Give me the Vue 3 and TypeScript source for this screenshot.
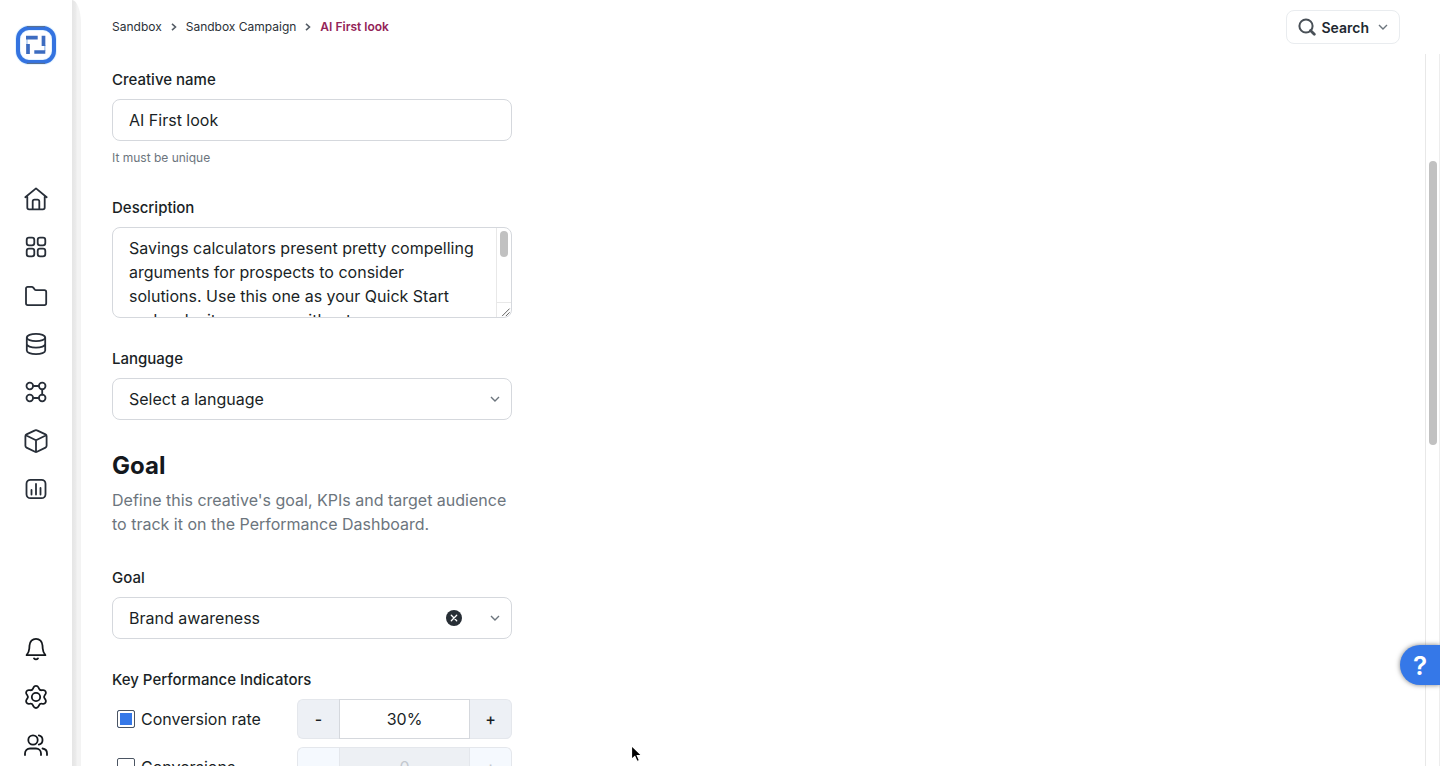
<script setup lang="ts">
import { ref } from 'vue'

interface Kpi {
  id: string
  label: string
  enabled: boolean
  value: string
}

const creativeName = ref('AI First look')
const description = ref(
  'Savings calculators present pretty compelling arguments for prospects to consider solutions. Use this one as your Quick Start and make it your own without any resources.',
)
const language = ref('')
const goal = ref('Brand awareness')
const kpis = ref<Kpi[]>([
  { id: 'rate', label: 'Conversion rate', enabled: true, value: '30%' },
  { id: 'conversions', label: 'Conversions', enabled: false, value: '0' },
])

function step(kpi: Kpi, delta: number) {
  const suffix = kpi.value.endsWith('%') ? '%' : ''
  kpi.value = `${Math.max(0, (parseInt(kpi.value, 10) || 0) + delta)}${suffix}`
}
</script>

<template>
  <div class="app">
    <aside class="sidebar">
      <a class="logo" href="#" aria-label="Start page">
        <svg width="42" height="42" viewBox="0 0 42 42" fill="none">
          <rect x="3" y="4" width="36" height="34" rx="11" stroke="#e3f4ff" stroke-width="6" />
          <rect x="3" y="4" width="36" height="34" rx="11" stroke="#3473e0" stroke-width="4" />
          <path d="M12 2.600h18M12 39.400h18" stroke="#5f7089" stroke-width="1" />
          <path d="M12 15v6M29.800 21v6" stroke="#a9c8f0" stroke-width="1.400" />
          <path d="M11 13.700h11.700M28.500 11.700V22M13 20v10M19.300 28h11" stroke="#3c6cc0" stroke-width="3.700" />
        </svg>
      </a>
      <nav class="nav nav-main" aria-label="Main">
        <a href="#" aria-label="Home">
          <svg viewBox="0 0 24 24"><path d="M1.300 10.200 12 1.400l10.700 8.800M3.300 8.800v11.700a1.800 1.800 0 0 0 1.800 1.800h13.800a1.800 1.800 0 0 0 1.800-1.800V8.800M8.700 22v-7.500a1.800 1.800 0 0 1 1.800-1.800h3a1.800 1.800 0 0 1 1.800 1.800V22" /></svg>
        </a>
        <a href="#" aria-label="Apps">
          <svg viewBox="0 0 24 24"><rect x="2.700" y="2.700" width="7.600" height="7.600" rx="2.300" /><rect x="13.700" y="2.700" width="7.600" height="7.600" rx="2.300" /><rect x="2.700" y="13.700" width="7.600" height="7.600" rx="2.300" /><rect x="13.700" y="13.700" width="7.600" height="7.600" rx="2.300" /></svg>
        </a>
        <a href="#" aria-label="Folders">
          <svg viewBox="0 0 24 24"><path d="M2 4.500c0-1 .7-1.700 1.700-1.700h4c.7 0 1.200.3 1.600.8l1.400 1.900c.3.500.8.700 1.400.7h8.300c1 0 1.800.8 1.800 1.800v11.300c0 1-.8 1.800-1.800 1.800H3.800c-1 0-1.800-.8-1.800-1.800z" /></svg>
        </a>
        <a href="#" aria-label="Data">
          <svg viewBox="0 0 24 24"><ellipse cx="12" cy="5.500" rx="9.200" ry="3.700" /><path d="M2.800 5.500v13c0 2 4.100 3.700 9.200 3.700s9.200-1.700 9.200-3.700v-13M2.800 12c0 2 4.100 3.600 9.200 3.600s9.200-1.600 9.200-3.600" /></svg>
        </a>
        <a href="#" aria-label="Workflows">
          <svg viewBox="0 0 24 24"><circle cx="5.800" cy="6" r="3.300" /><circle cx="18.200" cy="6" r="3.300" /><circle cx="5.800" cy="18" r="3.300" /><circle cx="18.200" cy="18" r="3.300" /><path d="M9.100 6h5.800M18.200 9.300v5.400M9.100 18h5.800" /></svg>
        </a>
        <a href="#" aria-label="Packages">
          <svg viewBox="0 0 24 24"><path d="M11 1.400a2 2 0 0 1 2 0l8.500 4a2 2 0 0 1 1.100 1.800v9.600a2 2 0 0 1-1.100 1.800L13 22.700a2 2 0 0 1-2 0l-8.500-4.100a2 2 0 0 1-1.100-1.800V7.200a2 2 0 0 1 1.100-1.800zM1.800 6.200 12 11.300l10.200-5.100M12 11.300v11.500" /></svg>
        </a>
        <a href="#" aria-label="Reports">
          <svg viewBox="0 0 24 24"><rect x="2.500" y="2.800" width="19" height="18.400" rx="4" /><path d="M7.500 13v4.500M12 7v10.500M16.500 11v6.500" /></svg>
        </a>
      </nav>
      <nav class="nav nav-bottom" aria-label="Account">
        <a href="#" aria-label="Notifications">
          <svg viewBox="0 0 24 24"><path d="M2.600 18.200c1.700-2 2.500-3.700 2.700-6.700l.2-3c.2-3.800 2.900-6.700 6.500-6.700s6.300 2.900 6.500 6.700l.2 3c.2 3 1 4.700 2.700 6.700zM10 21.400c.6.700 1.300 1 2 1s1.400-.3 2-1" /></svg>
        </a>
        <a href="#" aria-label="Settings">
          <svg viewBox="0 0 24 24"><circle cx="12" cy="12" r="4.200" /><path d="m9.500 2.500-.5 1.100a2.700 2.700 0 0 1-2.900 1.600L5 5.100C2.700 4.900 1.300 7.400 2.600 9.300l.7.900a2.700 2.700 0 0 1 0 3.400l-.7 1c-1.300 1.900.1 4.400 2.400 4.200l1.200-.1A2.700 2.700 0 0 1 9 20.300l.5 1.100c1 2.100 4 2.100 5 0l.5-1.100a2.700 2.700 0 0 1 2.800-1.600l1.200.1c2.300.2 3.700-2.300 2.400-4.200l-.7-1a2.700 2.700 0 0 1 0-3.400l.7-.9C22.700 7.400 21.300 4.900 19 5.100l-1.200.1A2.700 2.700 0 0 1 15 3.600l-.5-1.100c-1-2.100-4-2.100-5 0z" /></svg>
        </a>
        <a href="#" aria-label="Users">
          <svg viewBox="0 0 24 24"><circle cx="9" cy="7" r="4.700" /><path d="M14.800 2.400a4.700 4.700 0 0 1 0 9.200M1 22v-1.500a5 5 0 0 1 5-5h6a5 5 0 0 1 5 5V22M18.500 15.500c2.700.4 4.500 2.400 4.500 5V22" /></svg>
        </a>
      </nav>
    </aside>

    <div class="edge"></div>

    <div class="page">
      <header class="topbar">
        <nav class="crumbs" aria-label="Breadcrumb">
          <a href="#">Sandbox</a>
          <svg width="6" height="8" viewBox="0 0 6 8"><path d="M1 .8 4.500 4 1 7.200" /></svg>
          <a href="#">Sandbox Campaign</a>
          <svg width="6" height="8" viewBox="0 0 6 8"><path d="M1 .8 4.500 4 1 7.200" /></svg>
          <a class="current" href="#" aria-current="page">AI First look</a>
        </nav>
        <button class="search" type="button">
          <svg width="18" height="18" viewBox="0 0 18 18"><circle cx="8" cy="8" r="6.600" fill="none" stroke="#495057" stroke-width="2" /><path d="m12.500 12.500 3.800 3.800" stroke="#495057" stroke-width="2.800" stroke-linecap="round" /></svg>
          <span>Search</span>
          <svg class="chevron" width="10" height="6" viewBox="0 0 10 6"><path d="m1 1 4 4 4-4" /></svg>
        </button>
      </header>

      <div class="body">
        <main class="content">
          <form class="form" @submit.prevent>
            <div class="field">
              <label for="name">Creative name</label>
              <input id="name" v-model="creativeName" class="control" type="text" aria-describedby="name-hint" />
              <p id="name-hint" class="hint">It must be unique</p>
            </div>

            <div class="field">
              <label for="description">Description</label>
              <div class="area">
                <textarea id="description" v-model="description"></textarea>
                <div class="area-rail">
                  <div class="area-thumb"></div>
                  <svg class="grip" width="14" height="15" viewBox="0 0 14 15"><path d="m5 14 8-8M9 14l4-4" fill="none" stroke="#555" /></svg>
                </div>
              </div>
            </div>

            <div class="field">
              <label for="language">Language</label>
              <div class="picker">
                <select id="language" v-model="language" class="control">
                  <option value="">Select a language</option>
                  <option value="en">English</option>
                </select>
                <svg class="chevron" width="10" height="6" viewBox="0 0 10 6"><path d="m1 1 4 4 4-4" /></svg>
              </div>
            </div>

            <section class="intro">
              <h2>Goal</h2>
              <p>Define this creative's goal, KPIs and target audience to track it on the Performance Dashboard.</p>
            </section>

            <div class="field">
              <label for="goal">Goal</label>
              <div class="picker">
                <select id="goal" v-model="goal" class="control">
                  <option value=""></option>
                  <option>Brand awareness</option>
                </select>
                <button class="clear" type="button" aria-label="Clear goal" @click="goal = ''">
                  <svg width="16" height="16" viewBox="0 0 16 16"><circle cx="8" cy="8" r="8" fill="#272e35" /><path d="m5.300 5.300 5.400 5.400m0-5.400-5.400 5.400" stroke="#fff" stroke-width="1.300" stroke-linecap="round" /></svg>
                </button>
                <svg class="chevron" width="10" height="6" viewBox="0 0 10 6"><path d="m1 1 4 4 4-4" /></svg>
              </div>
            </div>

            <fieldset class="kpis">
              <legend>Key Performance Indicators</legend>
              <div v-for="kpi in kpis" :key="kpi.id" class="kpi">
                <label class="check">
                  <input v-model="kpi.enabled" type="checkbox" />
                  <span>{{ kpi.label }}</span>
                </label>
                <div class="stepper" :class="{ off: !kpi.enabled }">
                  <button type="button" :disabled="!kpi.enabled" :aria-label="`Decrease ${kpi.label}`" @click="step(kpi, -1)">-</button>
                  <input v-model="kpi.value" type="text" :disabled="!kpi.enabled" :aria-label="kpi.label" />
                  <button type="button" :disabled="!kpi.enabled" :aria-label="`Increase ${kpi.label}`" @click="step(kpi, 1)">+</button>
                </div>
              </div>
            </fieldset>
          </form>
        </main>
        <div class="rail"><div class="thumb"></div></div>
      </div>
    </div>

    <button class="help" type="button" aria-label="Help">?</button>

    <svg class="pointer" width="13" height="20" viewBox="0 0 13 20"><path d="M1.500 1.500v14l3.300-3.100 2.200 5.100 2.500-1-2.200-5h4.500z" fill="#000" stroke="#fff" stroke-width="1.200" /></svg>
  </div>
</template>

<style>
body {
  background: #fff;
}
</style>

<style scoped>
.app,
.app * {
  box-sizing: border-box;
}

.app {
  display: flex;
  height: 100vh;
  overflow: hidden;
  position: relative;
  background: #fff;
  color: #1a1f26;
  font-family: Inter, "Liberation Sans", sans-serif;
  font-size: 16px;
}

button,
input,
select,
textarea {
  font: inherit;
  color: inherit;
  margin: 0;
}

a {
  color: inherit;
  text-decoration: none;
}

/* Sidebar */
.sidebar {
  flex: none;
  width: 72px;
  display: flex;
  flex-direction: column;
  align-items: center;
  padding: 24px 0 9px;
}

.logo {
  height: 42px;
}

.nav {
  display: flex;
  flex-direction: column;
  gap: 24px;
  color: #272e38;
}

.nav-main {
  margin-top: 121px;
  min-height: 314px;
  justify-content: space-between;
}

.nav-bottom {
  margin-top: auto;
  color: #14181d;
}

.nav a,
.nav svg {
  display: block;
  width: 24px;
  height: 24px;
}

.nav svg {
  fill: none;
  stroke: currentColor;
  stroke-width: 1.8px;
  stroke-linecap: round;
  stroke-linejoin: round;
}

.edge {
  flex: none;
  width: 9px;
  background: linear-gradient(to right, #e6e6e6 0 1px, #ebebeb 4px, #f3f3f3 5px);
  border-top-right-radius: 9px 24px;
}

/* Top bar */
.page {
  flex: 1;
  min-width: 0;
  display: flex;
  flex-direction: column;
}

.topbar {
  flex: none;
  height: 54px;
  display: flex;
  align-items: center;
  justify-content: space-between;
  padding: 0 40px 0 31px;
}

.crumbs {
  display: flex;
  align-items: center;
  gap: 9px;
  font-size: 12px;
  line-height: 16px;
  color: #2b3138;
}

.crumbs svg {
  fill: none;
  stroke: #555d66;
  stroke-width: 1.6px;
}

.crumbs .current {
  color: #932358;
  font-weight: 600;
}

.search {
  display: flex;
  align-items: center;
  gap: 5px;
  height: 34px;
  padding: 0 11px;
  border: 1px solid #e9ecef;
  border-radius: 8px;
  background: #fff;
  font-size: 14px;
  font-weight: 600;
  color: #212830;
}

.search .chevron {
  margin-left: 4px;
}

.chevron {
  fill: none;
  stroke: #6c757d;
  stroke-width: 1.4px;
}

/* Scrolling area */
.body {
  flex: 1;
  min-height: 0;
  display: flex;
}

.content {
  flex: 1;
  min-width: 0;
  overflow: hidden;
  padding: 15px 31px 0;
}

.rail {
  flex: none;
  width: 15px;
  padding: 107px 3px 0;
  border-left: 1px solid #e8e8e8;
  border-right: 1px solid #ededed;
}

.thumb {
  width: 8px;
  height: 47%;
  border-radius: 4px;
  background: #c1c1c1;
}

/* Form */
.form {
  width: 400px;
  max-width: 100%;
  display: flex;
  flex-direction: column;
  gap: 30px;
}

.field {
  display: flex;
  flex-direction: column;
  gap: 8px;
}

.field > label,
legend {
  font-size: 15px;
  line-height: 22px;
  font-weight: 500;
}

.control {
  width: 100%;
  height: 42px;
  padding: 0 16px;
  border: 1px solid #d5d8dd;
  border-radius: 8px;
  background: #fff;
  appearance: none;
}

.hint {
  margin: 0;
  font-size: 12px;
  line-height: 18px;
  color: #6c757d;
}

.area {
  display: flex;
  height: 91px;
  overflow: hidden;
  border: 1px solid #d5d8dd;
  border-radius: 8px;
}

.area textarea {
  flex: 1;
  min-width: 0;
  padding: 8px 16px 0;
  border: 0;
  outline: 0;
  resize: none;
  overflow: hidden;
  background: transparent;
  line-height: 24px;
}

.area-rail {
  flex: none;
  width: 15px;
  display: flex;
  flex-direction: column;
  justify-content: space-between;
  padding-top: 3px;
  border-left: 1px solid #e8e8e8;
}

.area-thumb {
  width: 8px;
  height: 26px;
  margin-left: 3px;
  border-radius: 4px;
  background: #c1c1c1;
}

.grip {
  display: block;
  border-top: 1px solid #e8e8e8;
}

.picker {
  position: relative;
}

.picker .control {
  display: block;
}

.picker .chevron {
  position: absolute;
  top: 18px;
  right: 12px;
  pointer-events: none;
}

.clear {
  position: absolute;
  top: 13px;
  right: 50px;
  width: 16px;
  height: 16px;
  padding: 0;
  border: 0;
  background: none;
}

.clear svg {
  display: block;
}

.intro h2 {
  margin: 0 0 6px;
  font-size: 24px;
  line-height: 32px;
  font-weight: 700;
  color: #14181d;
}

.intro p {
  margin: 0;
  padding-bottom: 1px;
  line-height: 24px;
  color: #6c757d;
}

.kpis {
  min-width: 0;
  margin: 0;
  padding: 0;
  border: 0;
}

.kpis legend {
  padding: 0;
  margin-bottom: 8px;
}

.kpi {
  display: flex;
  align-items: center;
  justify-content: space-between;
  margin-bottom: 8px;
}

.check {
  display: flex;
  align-items: center;
  gap: 6px;
  padding-left: 5px;
}

.check input {
  appearance: none;
  width: 18px;
  height: 18px;
  border: 1px solid #4b5563;
  border-radius: 2px;
  background: #fff;
}

.check input:checked {
  background: #3578e8;
  box-shadow: inset 0 0 0 2px #fff;
}

.stepper {
  display: flex;
  width: 215px;
  height: 40px;
}

.stepper button {
  width: 42px;
  padding: 0;
  border: 1px solid #e4e7ec;
  border-radius: 6px 0 0 6px;
  border-right: 0;
  background: #edf0f5;
  font-weight: 500;
}

.stepper button:last-child {
  border-right: 1px solid #e4e7ec;
  border-left: 0;
  border-radius: 0 6px 6px 0;
}

.stepper input {
  flex: 1;
  min-width: 0;
  padding: 0;
  border: 1px solid #d5d8dd;
  text-align: center;
  background: #fff;
}

.stepper.off button,
.stepper.off input {
  color: #c3c8ce;
}

.stepper.off button {
  background: #f5f9fe;
}

.stepper.off input {
  background: #edf0f4;
  border-color: #e4e7ec;
}

/* Floating items */
.help {
  position: absolute;
  right: 0;
  bottom: 81px;
  width: 40px;
  height: 40px;
  padding: 0;
  border: 0;
  border-radius: 20px 0 0 20px;
  background: #3578e8;
  box-shadow: 0 0 5px rgba(0, 0, 0, 0.5);
  color: #fff;
  font-size: 26px;
  font-weight: 600;
}

.pointer {
  position: absolute;
  left: 630px;
  top: 744px;
  pointer-events: none;
}
</style>
